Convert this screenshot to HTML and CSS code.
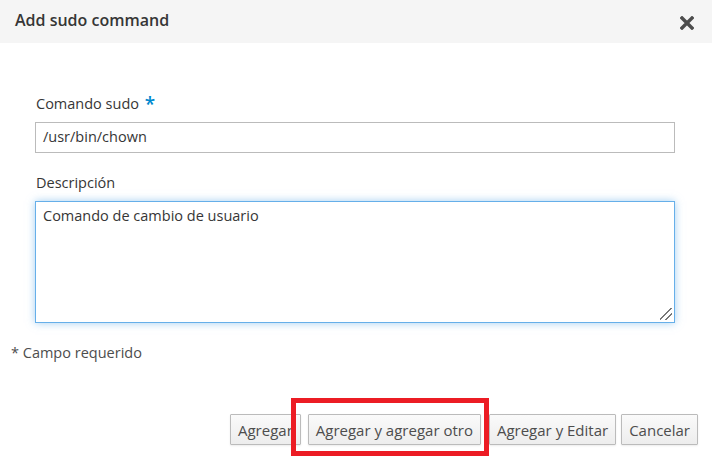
FILE: index.html
```html
<!DOCTYPE html>
<html>
<head>
<meta charset="utf-8">
<link rel="stylesheet" href="styles.css">
</head>
<body>
<div class="dialog">
  <div class="header">
    <h4 class="title">Add sudo command</h4>
    <span class="close"><svg width="14" height="14" viewBox="0 0 14 14"><path d="M2 2 L12 12 M12 2 L2 12" stroke="#4d4d4d" stroke-width="3.4" stroke-linecap="square"/></svg></span>
  </div>
  <div class="body">
    <div class="field">
      <label class="label">Comando sudo <span class="req">*</span></label>
      <div class="input">/usr/bin/chown</div>
    </div>
    <div class="field">
      <label class="label label-tight">Descripción</label>
      <div class="textarea">Comando de cambio de usuario<span class="grip"></span></div>
    </div>
  </div>
  <div class="required-note">* Campo requerido</div>
  <div class="footer">
    <button class="btn b1">Agregar</button>
    <button class="btn b2">Agregar y agregar otro</button>
    <button class="btn b3">Agregar y Editar</button>
    <button class="btn b4">Cancelar</button>
  </div>
  <div class="highlight"></div>
</div>
</body>
</html>
```
FILE: styles.css
```css
* { box-sizing: border-box; }
html, body { margin: 0; padding: 0; background: #fff; }
body { font-family: "Open Sans", "Liberation Sans", sans-serif; color: #363636; font-size: 14.5px; width: 712px; height: 456px; overflow: hidden; }
.dialog { position: relative; display: flex; flex-direction: column; height: 456px; }
.header { flex: none; height: 43px; background: #f5f5f5; display: flex; align-items: center; justify-content: space-between; padding: 0 18px 0 15px; }
.title { margin: 0; font-size: 16px; font-weight: 600; color: #363636; padding-bottom: 4px; }
.close { display: flex; margin-top: 2px; }
.body { padding: 49px 37px 0 35px; }
.field { margin-bottom: 20px; }
.label { display: block; font-size: 14.5px; color: #363636; margin: 0 0 7px 1px; line-height: 20px; height: 23px; }
.label-tight { margin-bottom: 5px; }
.req { color: #0088ce; font-size: 19px; font-weight: 600; position: relative; top: 2px; margin-left: 2px; }
.input { height: 31px; border: 1px solid #bbb; padding: 4px 7px; line-height: 20px; color: #363636; }
.textarea { position: relative; height: 122px; border: 1px solid #66afe9; box-shadow: 0 0 8px rgba(102,175,233,0.6); padding: 4px 7px; line-height: 20px; }
.grip { position: absolute; right: 2px; bottom: 2px; width: 12px; height: 12px; background: linear-gradient(135deg, transparent 45%, #777 45%, #777 52%, transparent 52%, transparent 70%, #777 70%, #777 77%, transparent 77%); }
.required-note { padding: 0 0 0 11px; margin-top: 0; color: #4d4d4d; line-height: 20px; }
.footer { display: flex; justify-content: flex-end; padding: 51px 14px 0 0; }
.btn { font-family: inherit; font-size: 15px; color: #4d4d4d; height: 31px; padding: 0 7px; border: 1px solid #bbb; border-radius: 1px; background: linear-gradient(#fafafa, #ededed); box-shadow: 0 1px 2px rgba(0,0,0,0.08); line-height: 20px; margin: 0; }
.b2 { margin-left: 7px; }
.b3 { margin-left: 8px; }
.b4 { margin-left: 5px; }
.highlight { position: absolute; left: 291px; top: 398px; width: 198px; height: 58px; border: 5px solid #ec1c24; }
```
